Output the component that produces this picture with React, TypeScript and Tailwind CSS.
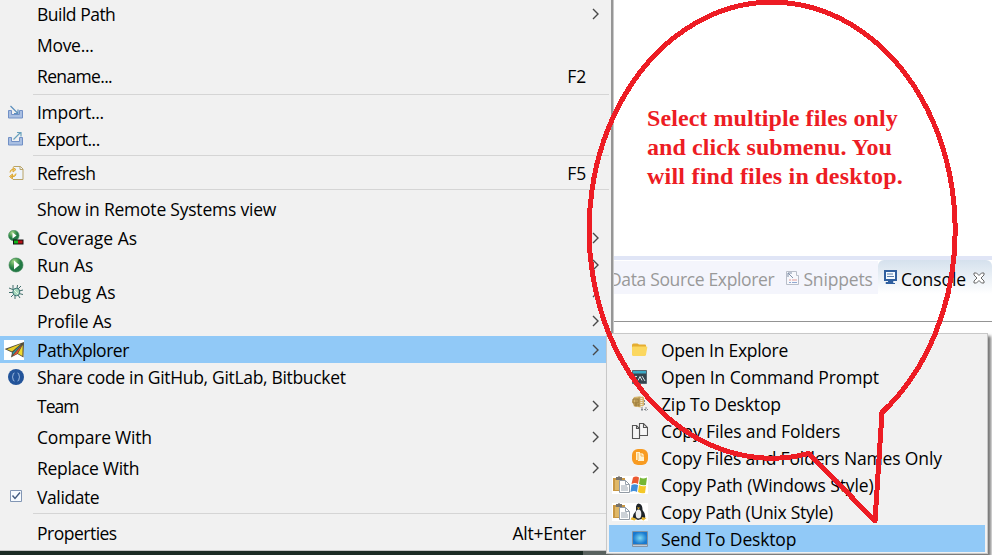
import React from "react";

type Item = {
  label: string;
  track: string;
  shortcut?: string;
  arrow?: boolean;
  icon?: React.ReactNode;
  active?: boolean;
  separator?: boolean;
};

const ImportIcon = () => (
  <svg className="block" width="16" height="16" viewBox="0 0 16 16" fill="none">
    <path d="M3.500 6.500H.500v7.500h14v-7.500h-3v4h-8z" fill="#a9bfe2" stroke="#7190c6" />
    <path d="M2.500 2l7 7M10 5.500v4H6" stroke="#5c8fbd" strokeWidth="1.2" />
  </svg>
);

const ExportIcon = () => (
  <svg className="block" width="16" height="16" viewBox="0 0 16 16" fill="none">
    <path d="M3.500 6.500H.500v7.500h14v-7.500h-3v4h-8z" fill="#a9bfe2" stroke="#7190c6" />
    <path d="M5.500 8.500l7-7M9 1.500h4v4" stroke="#69a1bd" strokeWidth="1.2" />
  </svg>
);

const RefreshIcon = () => (
  <svg className="block" width="16" height="16" viewBox="0 0 16 16" fill="none">
    <path d="M5.500 1.500h7l2.500 2.500v10.500h-10" fill="#eef4fc" stroke="#b9a468" />
    <path d="M12 1.500v3h3" stroke="#b9a468" />
    <path d="M5.500 4.500H4Q2 5 2 7.500M5 2.500l3 2-3 2.500zM3 11.500h3Q8 11 8 8.500M4.500 9l-3 2.500 3 2.500z" stroke="#d9a93f" fill="#f3cc69" />
  </svg>
);

const Play = ({ small }: { small?: boolean }) => (
  <svg className="block" width="16" height="16" viewBox="0 0 16 16">
    <defs>
      <radialGradient id="play" cx="35%" cy="25%">
        <stop stopColor="#a8d58c" />
        <stop offset="0.6" stopColor="#4d9e55" />
        <stop offset="1" stopColor="#237945" />
      </radialGradient>
    </defs>
    {small ? (
      <>
        <circle cx="5.800" cy="5.500" r="5.300" fill="url(#play)" stroke="#4b9564" strokeWidth=".6" />
        <path d="M4.500 2.500v6l4-3z" fill="#fff" />
        <path d="M5 9.500h10.500v5H5z" fill="#111" />
        <path d="M6 10.500h4v3H6z" fill="#12b51c" />
        <path d="M10 10.500h4.500v3H10z" fill="#b51217" />
      </>
    ) : (
      <>
        <circle cx="8" cy="8" r="7" fill="url(#play)" stroke="#32804c" strokeWidth=".6" />
        <path d="M6 3.500v9L11.500 8z" fill="#fff" />
      </>
    )}
  </svg>
);

const BugIcon = () => (
  <svg className="block" width="16" height="16" viewBox="0 0 16 16" fill="none">
    <path d="M5 1v4M9.500 1L9 5M1 4l5 2M1 8.500h4M3 13l3-3M7 15v-4M12 14l-2-3M15 10.500l-4-1M15 6l-4 1M13 2l-3 3" stroke="#406f6b" />
    <ellipse cx="8.300" cy="8" rx="3.500" ry="3.800" fill="#a7d8bd" stroke="#3d7477" />
    <path d="M6 6l4 4" stroke="#e5f7e8" />
  </svg>
);

const PlaneIcon = () => (
  <svg className="mr-[4px] block shrink-0" width="20" height="20" viewBox="0 0 20 20">
    <path d="M0 0h20v20H0z" fill="#fff" />
    <path d="M.5 9L20 2l-.5 15.500-6-3.500L7 17.500l1-5z" fill="#514c3b" />
    <path d="M3 9.200L17 3.800 8 11.500z" fill="#e8ce28" />
    <path d="M9 12.200L17.500 4.500 8.500 15z" fill="#2b9ead" />
    <path d="M8.500 16L18 5l-5 9z" fill="#df5337" />
    <path d="M14 13.500L18.700 5l-.3 11z" fill="#f0db2f" />
  </svg>
);

const ShareIcon = () => (
  <svg className="block" width="16" height="16" viewBox="0 0 16 16" fill="none">
    <circle cx="8" cy="8" r="8" fill="#23549a" />
    <path d="M6.500 4Q5 4 5 6t-1 2q1 0 1 2t1.500 2M9.500 4Q11 4 11 6t1 2q-1 0-1 2t-1.500 2" stroke="#9cb9df" />
  </svg>
);

const CheckIcon = () => (
  <svg className="block" width="16" height="16" viewBox="0 0 16 16" fill="none">
    <path d="M2.500 1.500h11v11h-11z" fill="#f7fbff" stroke="#8296b4" />
    <path d="M4.500 6.500L7 9.500l5-6" stroke="#435b80" strokeWidth="1.400" />
  </svg>
);

const Chevron = () => (
  <svg className="block" width="8" height="12" viewBox="0 0 8 12" fill="none">
    <path d="M1 1l5 5-5 5" stroke="#484848" strokeWidth="1.400" />
  </svg>
);

const items: Item[] = [
  { label: "Build Path", track: "tracking-[-0.5px]", arrow: true },
  { label: "Move...", track: "tracking-[-0.3px]" },
  { label: "Rename...", track: "tracking-[-0.65px]", shortcut: "F2", separator: true },
  { label: "Import...", track: "tracking-[-0.3px]", icon: <ImportIcon /> },
  { label: "Export...", track: "tracking-[-0.5px]", icon: <ExportIcon />, separator: true },
  { label: "Refresh", track: "tracking-[-0.6px]", shortcut: "F5", icon: <RefreshIcon />, separator: true },
  { label: "Show in Remote Systems view", track: "tracking-[-0.22px]" },
  { label: "Coverage As", track: "tracking-[-0.02px]", arrow: true, icon: <Play small /> },
  { label: "Run As", track: "tracking-[0.03px]", arrow: true, icon: <Play /> },
  { label: "Debug As", track: "tracking-[0.15px]", arrow: true, icon: <BugIcon /> },
  { label: "Profile As", track: "tracking-[-0.2px]", arrow: true },
  { label: "PathXplorer", track: "tracking-[-0.48px]", arrow: true, icon: <PlaneIcon />, active: true },
  { label: "Share code in GitHub, GitLab, Bitbucket", track: "tracking-[-0.32px]", icon: <ShareIcon /> },
  { label: "Team", track: "tracking-[-1px]", arrow: true },
  { label: "Compare With", track: "tracking-[-0.2px]", arrow: true },
  { label: "Replace With", track: "tracking-[-0.3px]", arrow: true },
  { label: "Validate", track: "tracking-[-0.4px]", icon: <CheckIcon />, separator: true },
  { label: "Properties", track: "tracking-[-0.5px]", shortcut: "Alt+Enter" },
];

const Row = ({ item }: { item: Item }) => (
  <>
    <div
      className={`flex items-center ${item.icon ? "h-[27px]" : "h-[31px]"} ${item.active ? "bg-[#91c9f7]" : ""}`}
    >
      <div className="flex w-[37px] shrink-0 justify-center pr-[5px]">{item.icon}</div>
      <div className={`flex-1 pt-[2px] whitespace-nowrap ${item.track}`}>{item.label}</div>
      {item.shortcut && <div className="pt-[2px] pr-[23px] tracking-[-0.2px]">{item.shortcut}</div>}
      {item.arrow && (
        <div className="pr-[9px]">
          <Chevron />
        </div>
      )}
    </div>
    {item.separator && (
      <div className="h-[7px] pt-[3px] pl-[33px]">
        <div className="h-px bg-[#d5d5d5]" />
      </div>
    )}
  </>
);

const Folder = () => (
  <svg className="block" width="18" height="18" viewBox="0 0 18 18">
    <path d="M2 4q0-1.500 1.500-1.500h4l1.500 1h6q1 0 1 1V14H3q-1 0-1-1z" fill="#e5ad31" />
    <path d="M2 6.500q0-1 1-1h13.500q1 0 .8 1L16 13.500q-.2 1.500-1.500 1.500H3.500Q2 15 2 13.500z" fill="#fbd75f" />
  </svg>
);

const Cmd = () => (
  <svg className="block" width="18" height="18" viewBox="0 0 18 18" fill="none">
    <path d="M2.500 2.500h14v13h-14z" fill="#34444e" stroke="#59656f" />
    <path d="M3 3h13v2.500H3z" fill="#3aa9c6" />
    <path d="M7 8.500q-3-1-3 1.500t3 2.500M8 12.500l2-4 2 4M12 8l3 5" stroke="#d7e1e5" />
  </svg>
);

const Zip = () => (
  <svg className="block" width="18" height="18" viewBox="0 0 18 18" fill="none">
    <path d="M4 2l8-1 2 1.500v8l-3 2-7-1-2-5z" fill="#d5b46c" />
    <path d="M3 4h5v4H3zM6 4.500v7M4 10h5M9 2.500v9" stroke="#967636" />
    <path d="M11.500 1v11" stroke="#eeeadb" strokeWidth="2" strokeDasharray="1 1" />
    <path d="M14.500 5v6M11 14.500h7M12 12v4M16 12v4" stroke="#84898e" strokeDasharray="2 1" />
  </svg>
);

const Files = () => (
  <svg className="block" width="18" height="18" viewBox="0 0 18 18" fill="#f6f6f6" stroke="#555" strokeWidth="1.100">
    <path d="M9.500 1.500h4l4 4v8h-8z" />
    <path d="M2.500 3.500h4l3 3v10h-7z" />
    <path d="M13.500 1.500v4h4M6.500 3.500v3h3" fill="none" />
  </svg>
);

const OrangeFiles = () => (
  <svg className="block" width="18" height="18" viewBox="0 0 18 18">
    <rect x="2" y="0" width="16" height="16" rx="6" fill="#f89b21" />
    <path d="M6 3h4v1h2l2 2v6H8v-1H6z" fill="#fff2cf" />
    <path d="M8 4v7M11 4v3h3" stroke="#f8b450" fill="none" />
  </svg>
);

const Clipboard = () => (
  <svg className="block" width="18" height="18" viewBox="0 0 18 18">
    <path d="M0 0h18v18H0z" fill="#fff" />
    <path d="M1 2h12v13H1z" fill="#c99742" />
    <path d="M3 4h8v10H3z" fill="#dfb868" />
    <path d="M4 1h2q1-2 2 0h2v3H4z" fill="#77736b" />
    <path d="M7.500 4.500h6l4 4v8h-10z" fill="#fff" stroke="#929ba4" />
    <path d="M13.500 4.500v4h4M9 10h6M9 12h7M9 14h7" stroke="#9aa5b0" fill="none" />
  </svg>
);

const Windows = () => (
  <svg className="block" width="18" height="18" viewBox="0 0 18 18">
    <path d="M0 0h18v18H0z" fill="#fff" />
    <path d="M3 1.500q3-2 6 0L8 8Q5 6 1.500 8z" fill="#eb5930" />
    <path d="M10 1.500q3 2 7 0L16 9q-4 1-7-1z" fill="#75b735" />
    <path d="M1.500 9q3-1.500 6.500 0l-1 7q-3-2-6.500 0z" fill="#408edb" />
    <path d="M9 9q3 2 7 1l-1 7q-4 1-7-1z" fill="#f4c829" />
  </svg>
);

const Penguin = () => (
  <svg className="block" width="18" height="18" viewBox="0 0 18 18">
    <path d="M0 0h18v18H0z" fill="#fff" />
    <path d="M6 3.500q1-4 4-2.500 2.500 1 2.500 6 3.500 4 2.500 8l-7 2-5-2q-1-3 3-7z" fill="#20252a" />
    <ellipse cx="8.500" cy="11" rx="2.800" ry="4.500" fill="#eee" />
    <path d="M7 4.500h3l-1.500 2zM2 14l4.500 2-2 1.500-4-1zM12 14l4.500 1-3 2.500-2-1z" fill="#e7b42a" />
  </svg>
);

const Desktop = () => (
  <svg className="block" width="18" height="18" viewBox="0 0 18 18">
    <defs>
      <radialGradient id="desk">
        <stop stopColor="#7edaf5" />
        <stop offset="1" stopColor="#1879cf" />
      </radialGradient>
    </defs>
    <rect x="2" y="1" width="16" height="16" rx="1" fill="#8394a5" />
    <path d="M3 2h14v12H3z" fill="url(#desk)" />
    <path d="M3 15.500h14" stroke="#c2cbd5" />
  </svg>
);

const subItems = [
  { label: "Open In Explore", icons: <Folder />, track: "tracking-[-0.27px]" },
  { label: "Open In Command Prompt", icons: <Cmd />, track: "tracking-[-0.12px]" },
  { label: "Zip To Desktop", icons: <Zip />, track: "tracking-[-0.15px]" },
  { label: "Copy Files and Folders", icons: <Files />, track: "tracking-[-0.12px]" },
  { label: "Copy Files and Folders Names Only", icons: <OrangeFiles />, track: "tracking-[-0.15px]" },
  { label: "Copy Path (Windows Style)", icons: <><Clipboard /><Windows /></>, track: "tracking-[-0.12px]" },
  { label: "Copy Path (Unix Style)", icons: <><Clipboard /><Penguin /></>, track: "tracking-[-0.28px]" },
  { label: "Send To Desktop", icons: <Desktop />, track: "tracking-[-0.16px]", active: true },
];

export default function App() {
  return (
    <div className="relative flex h-[555px] w-[992px] overflow-hidden bg-white font-['Open_Sans',sans-serif] text-[17.5px] leading-[25px] text-black">
      <div className="flex w-[613px] shrink-0 flex-col bg-[#1b2b24]">
        <div className="h-[551px] overflow-hidden border-r-2 border-b border-r-[#969696] border-b-[#c5c5c5] bg-[#f1f1f1] pr-[2px]">
          <div className="-mt-[2px]">
            {items.map((item) => (
              <Row key={item.label} item={item} />
            ))}
          </div>
        </div>
        <div className="ml-[583px] h-[4px] bg-[#59625f]" />
      </div>
      <div className="flex min-w-0 flex-1 flex-col border-l border-[#c9c9c9]">
        <div className="h-[256px] pt-[104px] pl-[33px] font-['Liberation_Serif',serif] text-[24px] leading-[29px] font-bold text-[#ed1c24]">
          <div className="tracking-[0.08px] whitespace-nowrap">Select multiple files only</div>
          <div className="tracking-[0.08px] whitespace-nowrap">and click submenu. You</div>
          <div className="tracking-[0.22px] whitespace-nowrap">will find files in desktop.</div>
        </div>
        <div className="h-[4px] bg-[#e0e5f6]" />
        <div className="flex h-[34px] text-[#999]">
          <div className="mt-px flex min-w-0 flex-1 items-center overflow-hidden bg-[#f4f5fc]">
            <div className="-ml-[5px] pt-[4px] tracking-[-0.35px] whitespace-nowrap">Data Source Explorer</div>
            <svg className="ml-[11px] block shrink-0" width="15" height="16" viewBox="0 0 15 16" fill="none">
              <path d="M1.500 1.500h10v4h2v9h-12z" fill="#f7f8fc" stroke="#b9bec9" />
              <path d="M3 3l5 5M3 7V3h4" stroke="#8190a8" />
              <path d="M4 10h2M7 10h5" stroke="#e39b98" />
              <path d="M4 12.500h2M7 12.500h5" stroke="#91a9d1" />
            </svg>
            <div className="ml-[3px] pt-[4px] tracking-[-0.15px] whitespace-nowrap">Snippets</div>
          </div>
          <div className="flex w-[114px] shrink-0 items-center rounded-t-[6px] bg-gradient-to-b from-[#d5e1ed] to-white pl-[5px] text-black">
            <svg className="block" width="16" height="16" viewBox="0 0 16 16" fill="none">
              <path d="M2 2h11v9H2z" fill="#f5fbff" stroke="#2f5f9f" strokeWidth="2" />
              <path d="M4 5h6M4 7.500h7" stroke="#587caa" />
              <path d="M5 12.500h5v1H3v1h9" stroke="#2f5f9f" />
            </svg>
            <div className="ml-[2px] pt-[5px] tracking-[-0.05px]">Console</div>
            <svg className="mt-[2px] ml-[7px] block" width="12" height="12" viewBox="0 0 12 12">
              <path d="M1 1h2.500L6 3.500 8.500 1H11v2L8 6l3 3v2H8.500L6 8.500 3.500 11H1V9l3-3-3-3z" fill="#fff" stroke="#686868" />
            </svg>
          </div>
        </div>
        <div className="mt-[27px] h-px bg-[#949494]" />
      </div>
      <div className="absolute top-[333px] left-[606px] h-[221px] w-[382px] border border-[#c8c8c8] bg-[#f1f1f1] pt-[2px] pr-[2px] pl-[2px] shadow-[3px_3px_3px_#777]">
        {subItems.map((s) => (
          <div key={s.label} className={`flex h-[27px] items-center ${s.active ? "bg-[#91c9f7]" : ""}`}>
            <div className="flex w-[52px] shrink-0 justify-end pr-[13px]">{s.icons}</div>
            <div className={`pt-[2px] whitespace-nowrap ${s.track}`}>{s.label}</div>
          </div>
        ))}
      </div>
      <svg className="pointer-events-none absolute inset-0" width="992" height="555" viewBox="0 0 992 555" fill="none">
        <path
          d="M809 453.500A183 228 0 1 1 882 412.500L875 521Z"
          stroke="#ed1c24"
          strokeWidth="5"
          strokeLinejoin="round"
          shapeRendering="crispEdges"
        />
      </svg>
    </div>
  );
}
